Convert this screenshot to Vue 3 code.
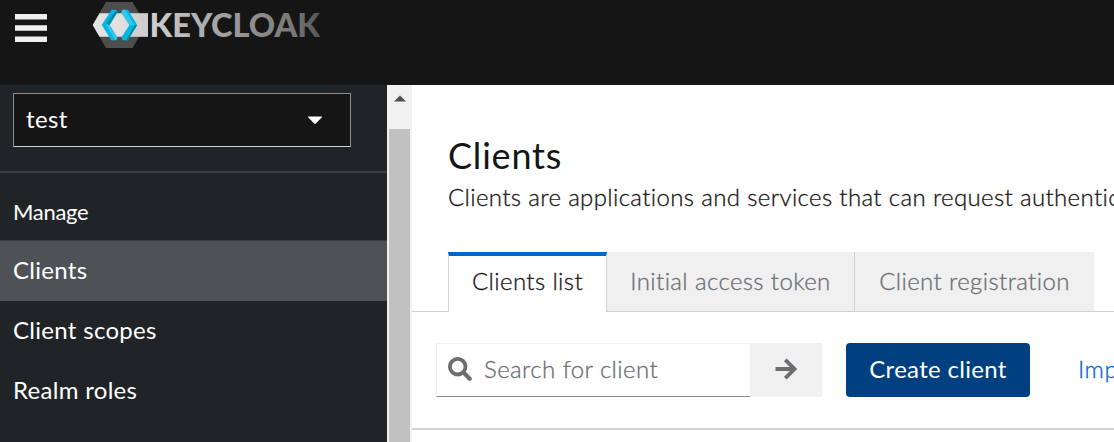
<script setup>
const navItems = [
  { label: 'Clients', active: true },
  { label: 'Client scopes', active: false },
  { label: 'Realm roles', active: false },
]
</script>

<template>
  <div class="page">
    <header class="masthead">
      <svg class="burger" width="32" height="28" viewBox="0 0 32 28">
        <path d="M0 0h32v5.500H0zM0 11.200h32v5.500H0zM0 22.500h32V28H0z" fill="#f0f0f0" />
      </svg>
      <svg class="logo" width="232" height="50" viewBox="90 0 232 50" role="img">
        <defs>
          <linearGradient id="word" gradientUnits="userSpaceOnUse" x1="150" y1="0" x2="320" y2="0">
            <stop offset="0" stop-color="#d0d0d0" />
            <stop offset=".5" stop-color="#999" />
            <stop offset=".85" stop-color="#777" />
            <stop offset="1" stop-color="#555" />
          </linearGradient>
          <linearGradient id="band" x1="0" y1="0" x2="1" y2="0">
            <stop offset="0" stop-color="#e4e4e4" />
            <stop offset=".5" stop-color="#e0e0e0" />
            <stop offset="1" stop-color="#d0d0d0" />
          </linearGradient>
        </defs>
        <path d="M106 2h26.500L146 25l-13.500 23H106L92.700 25z" fill="#4d4d4d" />
        <path d="M99.500 13.200H148v23.500H99.500L92.700 25z" fill="url(#band)" />
        <path d="M120 13.200 130 25l-8 11.700h26V13.200z" fill="#c8c8c8" opacity=".4" />
        <path d="M111.600 9.800h4.600l1.200 2.400L109.500 25l7.900 12.500-1.400 2.800h-4.600L101.700 25z" fill="#00b8e3" />
        <path d="M117.400 12.200 109.500 25l-3.300-1.200 9.300-12.600z" fill="#008aaa" />
        <path d="M106 24.500l3.500.5 7.900 12.500-1.400 2.800h-1z" fill="#33c6e9" />
        <path d="M122.700 9.800h5.200L137.200 25l-9.400 15.300h-5.200l-1.200-2.800 8-12.500-8-12.800z" fill="#00b8e3" />
        <path d="m121.400 12.200 1.300-2.400h2.500l8.900 15.200h-4.700z" fill="#33c6e9" />
        <path d="M137.200 25h-2.600l-8.600 15.300h1.800z" fill="#008aaa" />
        <text x="149.500" y="36.600" textLength="170.500" lengthAdjust="spacingAndGlyphs" class="word">KEYCLOAK</text>
      </svg>
    </header>
    <div class="body">
      <nav class="sidebar">
        <button class="realm"><span>test</span>
          <svg width="16" height="9" viewBox="0 0 16 9"><path d="M1.500.5h13Q15.300.6 14.700 1.500L8.800 7.600q-.8.8-1.600 0L1.300 1.500Q.7.600 1.500.5z" fill="#fff" /></svg>
        </button>
        <hr class="rule" />
        <h2 class="section">Manage</h2>
        <a v-for="n in navItems" :key="n.label" :class="['item', { active: n.active }]">{{ n.label }}</a>
      </nav>
      <div class="scrollbar">
        <svg width="12" height="7" viewBox="0 0 12 7"><path d="M0 6.500 6 .5l6 6z" fill="#505050" /></svg>
        <div class="thumb"></div>
      </div>
      <main class="main">
        <h1 class="title">Clients</h1>
        <p class="desc">Clients are applications and services that can request authentication</p>
        <div class="tabs">
          <button class="tab current">Clients list</button>
          <button class="tab second">Initial access token</button>
          <button class="tab third">Client registration</button>
        </div>
        <div class="toolbar">
          <div class="search">
            <svg width="24" height="24" viewBox="0 0 24 24" fill="none" stroke="#6a6e73">
              <circle cx="9.700" cy="9.700" r="7.800" stroke-width="3.800" />
              <path d="m15.500 15.500 6.200 6.200" stroke-width="4.200" stroke-linecap="round" />
            </svg>
            <span>Search for client</span>
          </div>
          <button class="go">
            <svg width="22" height="22" viewBox="0 0 22 22" fill="none" stroke="#6a6e73" stroke-width="3.800">
              <path d="M.5 11H19M10.300 1.800 19.500 11l-9.200 9.200" />
            </svg>
          </button>
          <button class="create">Create client</button>
          <a class="import">Import</a>
        </div>
      </main>
    </div>
  </div>
</template>

<style>
body { overflow: hidden; }
</style>

<style scoped>
.page { width: 1114px; height: 442px; overflow: hidden; display: flex; flex-direction: column; font-family: Lato, "Liberation Sans", sans-serif; font-size: 24px; color: #151515; background: #fff; }
.page * { box-sizing: border-box; }
button { font: inherit; border: 0; padding: 0; margin: 0; border-radius: 0; white-space: nowrap; }
.masthead { height: 85px; flex: none; background: #151515; display: flex; align-items: flex-start; padding-left: 15px; }
.burger { margin-top: 14px; flex: none; }
.logo { margin-left: 43px; flex: none; }
.word { font-size: 32.500px; font-weight: 900; fill: url(#word); }
.body { flex: 1; min-height: 0; display: flex; }
.sidebar { width: 387px; flex: none; background: #212427; color: #fff; padding-top: 8px; display: flex; flex-direction: column; }
.realm { width: 338px; height: 54px; margin-left: 13px; padding: 0 27px 0 12px; background: #151515; border: 1px solid #8a8d90; border-bottom-color: #d2d2d2; color: #fff; display: flex; align-items: center; justify-content: space-between; letter-spacing: .4px; }
.realm span { padding-bottom: 3px; }
.rule { width: 100%; height: 2px; border: 0; margin: 24px 0 0; background: #3c3f42; }
.section { margin: 0; height: 68px; flex: none; padding: 22px 13px 0; font-size: 22px; line-height: 34px; font-weight: 400; border-bottom: 1px solid #3c3f42; letter-spacing: -.3px; }
.item { height: 60px; flex: none; line-height: 57px; padding-left: 13px; letter-spacing: .3px; }
.active { background: #4f5255; }
.scrollbar { width: 25px; flex: none; background: #f1f1f1; display: flex; flex-direction: column; padding: 10px 2px 0; }
.scrollbar svg { margin-left: 5px; flex: none; }
.thumb { width: 21px; flex: 1; margin-top: 27px; background: #c1c1c1; }
.main { flex: 1; min-width: 0; overflow: hidden; padding-top: 48px; }
.title { margin: 0 0 0 36px; font-size: 36px; line-height: 44px; font-weight: 400; letter-spacing: .8px; }
.desc { margin: 2px 0 0 36px; line-height: 36px; height: 36px; white-space: nowrap; font-weight: 300; letter-spacing: .36px; -webkit-text-stroke: .3px; }
.tabs { display: flex; height: 60px; margin-top: 37px; padding-left: 36px; border-bottom: 1px solid #d2d2d2; }
.tab { height: 59px; background: #f0f0f0; color: #6a6e73; letter-spacing: .38px; padding-bottom: 2px; font-weight: 300; -webkit-text-stroke: .3px; }
.current { width: 159px; height: 60px; background: #fff; color: #151515; border: 1px solid #d2d2d2; border-top: 4px solid #06c; border-bottom: 0; padding-bottom: 7px; }
.second { width: 248px; border-right: 1px solid #d2d2d2; }
.third { width: 239px; }
.toolbar { display: flex; height: 118px; padding: 31px 0 0 24px; border-bottom: 2px solid #d2d2d2; }
.search { width: 314px; height: 54px; flex: none; display: flex; align-items: center; padding-left: 11px; gap: 12px; border: 1px solid #f0f0f0; border-right: 0; border-bottom-color: #8a8d90; color: #6a6e73; letter-spacing: .42px; font-weight: 300; -webkit-text-stroke: .3px; }
.search span { padding-bottom: 3px; }
.search svg { margin-bottom: 2px; }
.go { width: 72px; height: 54px; flex: none; background: #f0f0f0; display: flex; align-items: center; justify-content: center; padding-bottom: 2px; }
.create { width: 184px; height: 54px; flex: none; margin-left: 24px; border-radius: 4px; background: #004080; color: #fff; letter-spacing: .3px; padding-bottom: 3px; }
.import { margin-left: 48px; line-height: 52px; height: 54px; color: #06c; white-space: nowrap; letter-spacing: .5px; font-weight: 300; -webkit-text-stroke: .3px; }
</style>
